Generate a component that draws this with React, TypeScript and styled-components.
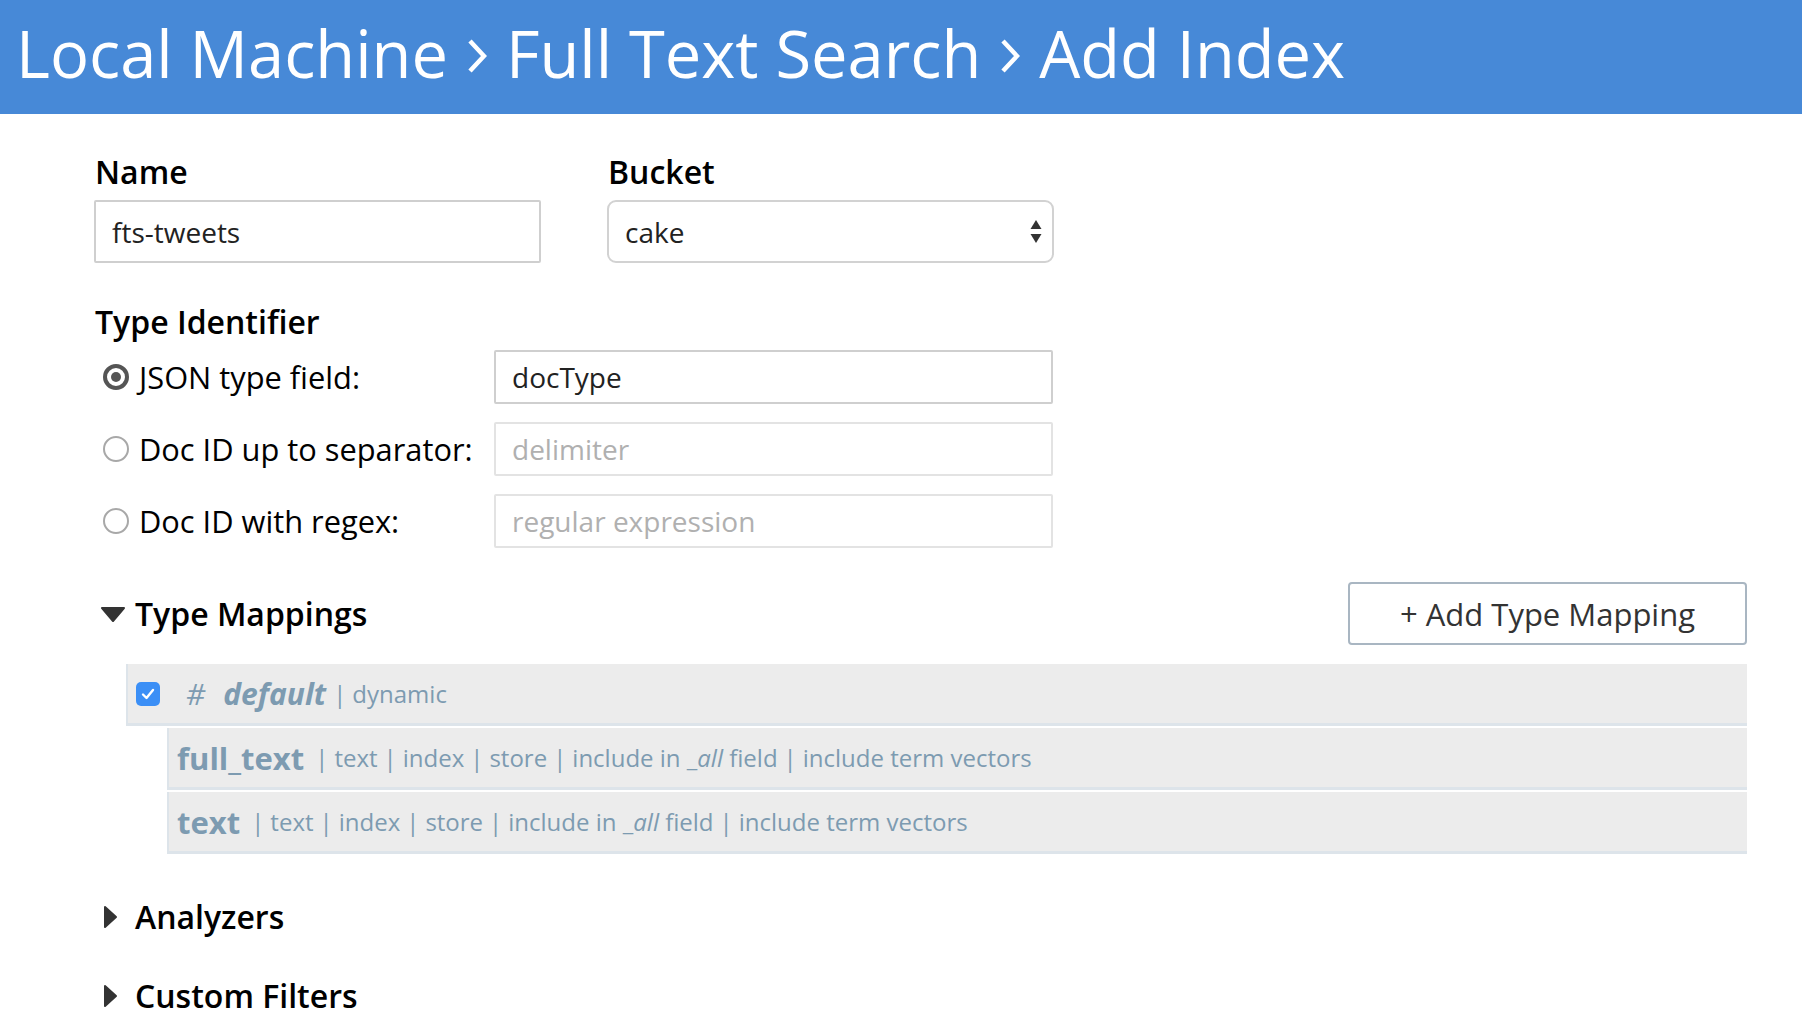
import React from "react";
import styled, { createGlobalStyle } from "styled-components";

const GlobalStyle = createGlobalStyle`
  html, body { margin: 0; padding: 0; background: #fff; }
  body { font-family: "Open Sans", "Liberation Sans", sans-serif; color: #000; }
  * { box-sizing: border-box; }
`;

const Header = styled.header`
  height: 114px;
  background: #4789d7;
  color: #fff;
  display: flex;
  align-items: center;
  padding-left: 16px;
  padding-bottom: 9px;
  font-size: 65px;
  font-weight: 400;
  letter-spacing: 0;
  white-space: nowrap;
`;

const Crumb = styled.span``;

const Sep = styled.span`
  margin: 0 19px;
  display: inline-flex;
  align-items: center;
  padding-top: 6px;
  svg { display: block; }
`;

const Main = styled.main`
  padding: 36px 55px 40px 94px;
`;

const TopFields = styled.div`
  display: grid;
  grid-template-columns: 447px 447px;
  column-gap: 66px;
`;

const Field = styled.div`
  display: flex;
  flex-direction: column;
`;

const Label = styled.div`
  font-size: 32px;
  font-weight: 600;
  line-height: 44px;
  height: 44px;
  margin-bottom: 6px;
  padding-left: 1px;
`;

const TextInput = styled.input<{ $h?: number; $muted?: boolean }>`
  height: ${(p) => p.$h ?? 63}px;
  width: 100%;
  border: 2px solid ${(p) => (p.$muted ? "#e3e3e3" : "#cfcfcf")};
  border-radius: 2px;
  padding: 0 16px 0 16px;
  font-family: "Open Sans", "Liberation Sans", sans-serif;
  font-size: 28px;
  color: #222;
  background: #fff;
  outline: none;
  &::placeholder { color: #b0b0b0; }
`;

const SelectBox = styled.div`
  height: 63px;
  border: 2px solid #d2d2d2;
  border-radius: 9px;
  display: flex;
  align-items: center;
  justify-content: space-between;
  padding: 0 9px 0 16px;
  font-size: 28px;
  color: #222;
`;

const Section = styled.section`
  margin-top: 37px;
`;

const RadioGrid = styled.div`
  display: grid;
  grid-template-columns: 400px 559px;
  row-gap: 18px;
`;

const RadioLabel = styled.label`
  display: flex;
  align-items: center;
  gap: 10px;
  padding-left: 9px;
  font-size: 30.8px;
  height: 54px;
  white-space: nowrap;
`;

const RadioCircle = styled.span<{ $checked?: boolean }>`
  width: 26px;
  height: 26px;
  border-radius: 50%;
  border: ${(p) => (p.$checked ? "4px solid #555" : "2px solid #a8a8a8")};
  display: inline-flex;
  align-items: center;
  justify-content: center;
  flex: none;
  &::after {
    content: "";
    display: ${(p) => (p.$checked ? "block" : "none")};
    width: 10px;
    height: 10px;
    border-radius: 50%;
    background: #555;
  }
`;

const MappingsHead = styled.div`
  margin-top: 34px;
  display: flex;
  align-items: center;
  justify-content: space-between;
  height: 63px;
`;

const Toggle = styled.div`
  display: flex;
  align-items: center;
  font-size: 32px;
  font-weight: 600;
  line-height: 44px;
  svg { display: block; flex: none; }
`;

const ToggleText = styled.span<{ $left: number }>`
  margin-left: ${(p) => p.$left}px;
`;

const AddButton = styled.button`
  width: 399px;
  height: 63px;
  border: 2px solid #a9b6c2;
  border-radius: 4px;
  background: #fff;
  font-family: "Open Sans", "Liberation Sans", sans-serif;
  font-size: 31px;
  color: #333;
  cursor: pointer;
`;

const MappingList = styled.div`
  margin-top: 19px;
  margin-left: 32px;
  display: flex;
  flex-direction: column;
  gap: 2px;
`;

const MapRow = styled.div<{ $child?: boolean }>`
  height: 62px;
  margin-left: ${(p) => (p.$child ? 41 : 0)}px;
  background: #ececec;
  border-left: 2px solid #dde4ea;
  border-bottom: 3px solid #dde4ea;
  display: flex;
  align-items: center;
  padding-left: 8px;
  color: #7d9bb1;
  white-space: nowrap;
`;

const Check = styled.span`
  width: 24px;
  height: 24px;
  border-radius: 5px;
  background: #3b8ff6;
  display: inline-flex;
  align-items: center;
  justify-content: center;
  margin-right: 26px;
  svg { display: block; }
`;

const Hash = styled.span`
  font-size: 30px;
  font-style: italic;
  margin-right: 18px;
`;

const TypeName = styled.span<{ $italic?: boolean }>`
  font-size: ${(p) => (p.$italic ? 30 : 31)}px;
  font-weight: 700;
  font-style: ${(p) => (p.$italic ? "italic" : "normal")};
  margin-right: ${(p) => (p.$italic ? 1 : 5)}px;
`;

const Meta = styled.span`
  font-size: 24px;
  em { font-style: italic; }
`;

const Bar = styled.span`
  margin: 0 6px;
`;

const Collapsed = styled.div`
  margin-top: 41px;
  display: flex;
  flex-direction: column;
  gap: 35px;
`;

const DownTri = () => (
  <svg width="28" height="16" viewBox="0 0 28 16" style={{ marginLeft: 6 }}>
    <path d="M2 2 L24 2 L13 15 Z" fill="#333" stroke="#333" strokeWidth="2" strokeLinejoin="round" />
  </svg>
);

const RightTri = () => (
  <svg width="16" height="24" viewBox="0 0 16 24" style={{ marginLeft: 9 }}>
    <path d="M2 2 L13 12 L2 22 Z" fill="#333" stroke="#333" strokeWidth="2" strokeLinejoin="round" />
  </svg>
);

const Chevron = () => (
  <svg width="20" height="36" viewBox="0 0 20 36">
    <path d="M3 3 L17 18 L3 33" fill="none" stroke="#fff" strokeWidth="4.5" strokeLinecap="butt" />
  </svg>
);

const metaParts = ["text", "index", "store"];

const FieldMeta = () => (
  <Meta>
    {metaParts.map((m) => (
      <React.Fragment key={m}>
        <Bar>|</Bar>
        {m}
      </React.Fragment>
    ))}
    <Bar>|</Bar>include in _<em>all</em> field<Bar>|</Bar>include term vectors
  </Meta>
);

export default function App() {
  return (
    <>
      <GlobalStyle />
      <Header>
        <Crumb>Local Machine</Crumb>
        <Sep><Chevron /></Sep>
        <Crumb>Full Text Search</Crumb>
        <Sep><Chevron /></Sep>
        <Crumb>Add Index</Crumb>
      </Header>
      <Main>
        <TopFields>
          <Field>
            <Label>Name</Label>
            <TextInput defaultValue="fts-tweets" />
          </Field>
          <Field>
            <Label>Bucket</Label>
            <SelectBox>
              <span>cake</span>
              <svg width="14" height="28" viewBox="0 0 14 28">
                <path d="M1.5 11 L7 2 L12.5 11 Z" fill="#333" />
                <path d="M1.5 16 L12.5 16 L7 25 Z" fill="#333" />
              </svg>
            </SelectBox>
          </Field>
        </TopFields>

        <Section>
          <Label>Type Identifier</Label>
          <RadioGrid>
            <RadioLabel>
              <RadioCircle $checked />
              JSON type field:
            </RadioLabel>
            <TextInput $h={54} defaultValue="docType" />
            <RadioLabel>
              <RadioCircle />
              Doc ID up to separator:
            </RadioLabel>
            <TextInput $h={54} $muted placeholder="delimiter" />
            <RadioLabel>
              <RadioCircle />
              Doc ID with regex:
            </RadioLabel>
            <TextInput $h={54} $muted placeholder="regular expression" />
          </RadioGrid>
        </Section>

        <MappingsHead>
          <Toggle>
            <DownTri />
            <ToggleText $left={7}>Type Mappings</ToggleText>
          </Toggle>
          <AddButton>+ Add Type Mapping</AddButton>
        </MappingsHead>

        <MappingList>
          <MapRow>
            <Check>
              <svg width="14" height="12" viewBox="0 0 14 12">
                <path d="M2 6.5 L5.5 10 L12 2" fill="none" stroke="#fff" strokeWidth="2.4" strokeLinecap="round" strokeLinejoin="round" />
              </svg>
            </Check>
            <Hash>#</Hash>
            <TypeName $italic>default</TypeName>
            <Meta>
              <Bar>|</Bar>dynamic
            </Meta>
          </MapRow>
          <MapRow $child>
            <TypeName>full_text</TypeName>
            <FieldMeta />
          </MapRow>
          <MapRow $child>
            <TypeName>text</TypeName>
            <FieldMeta />
          </MapRow>
        </MappingList>

        <Collapsed>
          <Toggle>
            <RightTri />
            <ToggleText $left={16}>Analyzers</ToggleText>
          </Toggle>
          <Toggle>
            <RightTri />
            <ToggleText $left={16}>Custom Filters</ToggleText>
          </Toggle>
        </Collapsed>
      </Main>
    </>
  );
}
